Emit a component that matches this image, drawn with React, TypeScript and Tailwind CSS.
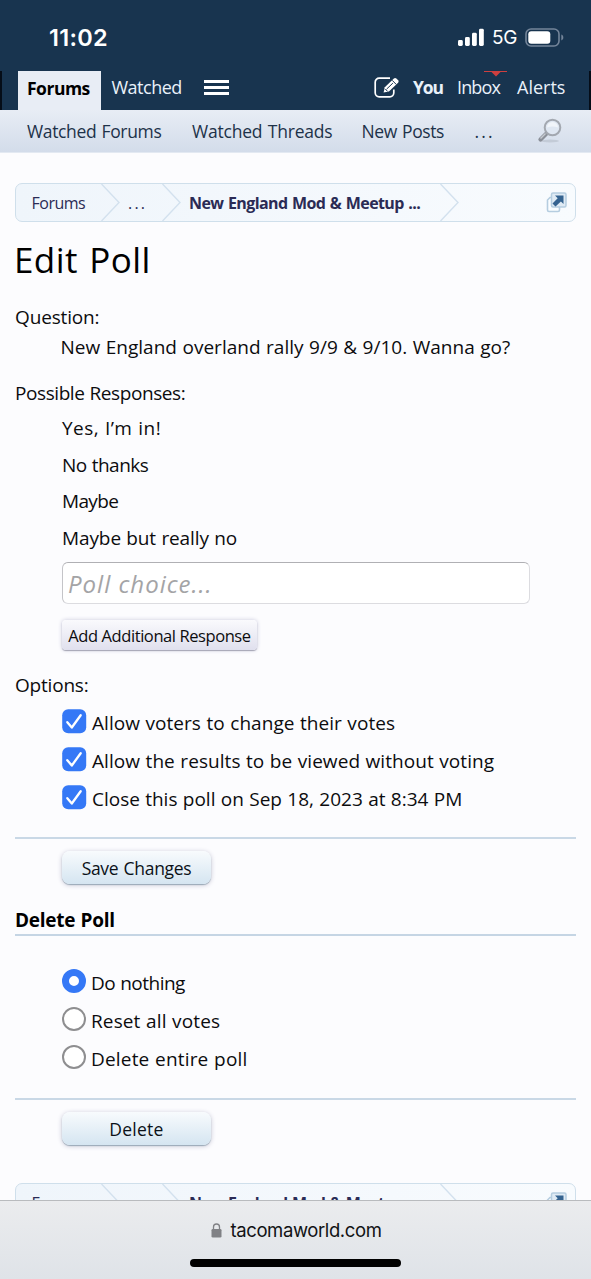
import clsx from "clsx";

const responses = [
  { text: "Yes, I’m in!", className: "tracking-[0.45px]" },
  { text: "No thanks", className: "tracking-[-0.5px]" },
  { text: "Maybe", className: "tracking-[-0.65px]" },
  { text: "Maybe but really no", className: "tracking-[-0.1px]" },
];

const options = [
  {
    text: "Allow voters to change their votes",
    className: "tracking-[0.05px]",
  },
  {
    text: "Allow the results to be viewed without voting",
    className: "tracking-[0.06px]",
  },
  {
    text: "Close this poll on Sep 18, 2023 at 8:34 PM",
    className: "tracking-[-0.02px]",
  },
];

const deleteOptions = [
  { text: "Do nothing", className: "tracking-[-0.5px]", checked: true },
  { text: "Reset all votes", className: "tracking-[0.12px]", checked: false },
  { text: "Delete entire poll", className: "tracking-[0.18px]", checked: false },
];

const StatusBar = () => (
  <div className="h-[71px] shrink-0 flex justify-between pl-[49px] pr-[27px] text-white font-['Inter',sans-serif]">
    <p className="mt-[23px] text-[23.5px] leading-[30px] font-semibold tracking-[0.28px]">
      11:02
    </p>
    <div className="flex items-center h-[30px] mt-[23px]">
      <svg className="-mt-[2px]" width="27" height="18" viewBox="0 0 27 18" fill="currentColor">
        <rect x="0" y="12" width="4.800" height="6" rx="1.4" />
        <rect x="7" y="9" width="4.800" height="9" rx="1.4" />
        <rect x="14" y="4.800" width="4.800" height="13.200" rx="1.4" />
        <rect x="21" y="0.800" width="4.800" height="17.200" rx="1.4" />
      </svg>
      <span className="ml-[7px] w-[26px] text-[19px] tracking-[-0.2px]">5G</span>
      <svg className="ml-[7px]" width="39" height="20" viewBox="0 0 39 20">
        <rect
          x="1"
          y="1"
          width="33"
          height="17"
          rx="5"
          fill="none"
          stroke="#74859a"
          strokeWidth="1.6"
        />
        <rect x="3.3" y="3.3" width="22" height="12.4" rx="3" fill="#fff" />
        <path d="M36.3 6.6c1.6.6 2 1.6 2 2.9s-.4 2.3-2 2.9z" fill="#74859a" />
      </svg>
    </div>
  </div>
);

const NavTabs = () => (
  <div className="relative h-[39px] shrink-0 flex text-lg leading-[33px] text-[#e9f1fa]">
    <div className="absolute left-0 top-0 w-[2px] h-[39px] bg-[#050d18]" />
    <div className="absolute right-0 top-0 w-[2px] h-[39px] bg-[#050d18]" />
    <div className="ml-[18px] w-[83px] pl-[9px] bg-[#e8edf5] text-black font-bold text-[17.5px] leading-[35px] tracking-[-0.5px]">
      Forums
    </div>
    <p className="ml-[10.5px] w-[92px] tracking-[-0.5px]">Watched</p>
    <div className="mt-[9px] h-[15px] w-[25px] flex flex-col justify-between">
      <div className="h-[3px] bg-white" />
      <div className="h-[3px] bg-white" />
      <div className="h-[3px] bg-white" />
    </div>
    <svg
      className="ml-[145.5px] mt-[6px]"
      width="27"
      height="22"
      viewBox="0 0 27 22"
      fill="none"
      stroke="#fff"
    >
      <path
        d="M16 1.2H5.2a4 4 0 0 0-4 4v10.6a4 4 0 0 0 4 4h10.6a4 4 0 0 0 4-4v-3.3"
        strokeWidth="1.7"
      />
      <path
        d="m9.6 15.5 1.2-5.2L19.9 1.500q1.3-1 2.5.1l1.7 1.7q1.1 1.2 0 2.5l-9.2 8.7z"
        fill="#fff"
        stroke="none"
      />
      <path
        d="m18.2 3.3 4.1 4.2M12.6 12.1l6.3-6M11.3 12l2.3 2.4"
        stroke="#18344f"
        strokeWidth="1"
      />
    </svg>
    <p className="ml-[12px] w-[44px] text-[17.5px] font-bold tracking-[-1.1px]">
      You
    </p>
    <div className="relative w-[60px]">
      <p className="tracking-[-0.85px]">Inbox</p>
      <svg className="absolute left-[27px] top-0" width="23" height="6">
        <path d="M0 0h23v1H16.500L12 5.500 7.500 1H0z" fill="#ce3f3f" />
      </svg>
    </div>
    <p>Alerts</p>
  </div>
);

const SearchIcon = () => (
  <svg
    className="absolute left-[537px] top-[8px]"
    width="26"
    height="26"
    viewBox="0 0 26 26"
  >
    <ellipse cx="13" cy="23" rx="9" ry="1.500" fill="#c3cbd7" />
    <path
      d="m9 16-5.500 5.500"
      stroke="#8b9099"
      strokeWidth="4.200"
      strokeLinecap="round"
    />
    <path d="m8.500 15.500-5 5" stroke="#c5c9d0" strokeWidth="1.400" />
    <circle
      cx="15.500"
      cy="9.500"
      r="7.800"
      fill="#dfe7f2"
      stroke="#a3a8b0"
      strokeWidth="2"
    />
    <path d="M10 9.500a5.500 5.500 0 0 1 11 0q-5.500-2-11 0" fill="#f1f5fa" />
  </svg>
);

const SubNav = () => (
  <div className="relative h-[43px] shrink-0 flex pl-[27px] bg-linear-to-b from-[#e8edf5] to-[#d3dcea] border-b border-[#e3e9f2] text-[17.5px] leading-[42px] text-[#1d3249] [word-spacing:1px]">
    <p className="w-[165px] tracking-[-0.35px]">Watched Forums</p>
    <p className="w-[169.500px] tracking-[-0.2px]">Watched Threads</p>
    <p className="w-[113px] tracking-[-0.4px]">New Posts</p>
    <p className="tracking-[2.2px]">...</p>
    <SearchIcon />
  </div>
);

const CrumbArrow = () => (
  <svg
    className="shrink-0"
    width="19"
    height="37"
    viewBox="0 0 19 37"
    fill="none"
    stroke="#d3e1ee"
    strokeWidth="1.400"
  >
    <path d="M.5 0 18 18.500.5 37" />
  </svg>
);

const Breadcrumb = () => (
  <div className="h-[39px] shrink-0 flex border-[1.500px] border-[#cfdfeb] rounded-[7px] bg-linear-to-r from-[#eff5fb] to-[#f8fbfe] text-base leading-[38px] text-[#2b2b55]">
    <p className="pl-[15.500px] w-[85px] tracking-[-0.5px]">Forums</p>
    <CrumbArrow />
    <p className="pl-[8px] w-[42px] tracking-[2.200px]">...</p>
    <CrumbArrow />
    <p className="pl-[8px] w-[259px] font-bold tracking-[-0.6px] [word-spacing:1px] whitespace-nowrap">
      New England Mod &amp; Meetup ...
    </p>
    <CrumbArrow />
    <svg
      className="ml-[87px] mt-[8px]"
      width="21"
      height="21"
      viewBox="0 0 21 21"
    >
      <path
        d="M4 5.500h9.500v12.500a1.500 1.500 0 0 1-1.500 1.500H3A1.500 1.500 0 0 1 1.500 18V8z"
        fill="#fafdff"
        stroke="#b5cde0"
        strokeWidth="1.600"
      />
      <rect
        x="5.500"
        y="1"
        width="14.500"
        height="14"
        rx="1.500"
        fill="#dfeaf4"
        stroke="#b5cde0"
        strokeWidth="1.500"
      />
      <path
        d="M9 3.500h8.500V12l-2.600-2.600L9.500 14.500 6.500 11.500l5.200-5.200z"
        fill="#356390"
      />
    </svg>
  </div>
);

const Checkbox = () => (
  <svg className="shrink-0 -mt-[4px]" width="25" height="25" viewBox="0 0 25 25">
    <rect x="0.200" y="0.200" width="24" height="24" rx="6" fill="#3578f6" />
    <path
      d="m5.300 13.200 4.500 5.300L18.700 6.300"
      fill="none"
      stroke="#fff"
      strokeWidth="2.300"
      strokeLinecap="round"
      strokeLinejoin="round"
    />
  </svg>
);

const Radio = ({ checked }: { checked: boolean }) => (
  <span
    className={clsx(
      "shrink-0 size-[24px] mr-px -mt-[4px] rounded-full bg-white",
      checked ? "border-[7px] border-[#3578f6]" : "border-2 border-[#8e8e90]"
    )}
  />
);

const SubmitButton = ({ text, className }: { text: string; className?: string }) => (
  <button
    className={clsx(
      "block ml-[47px] w-[149px] h-[33px] rounded-[8px] bg-linear-to-b from-[#f8fbfd] to-[#d5e5f1] shadow-[0_1px_1px_#9aa9b7,0_1px_5px_#c3c3d3] text-[17.5px] leading-[34px] text-[#0b1118] [word-spacing:1px]",
      className
    )}
  >
    {text}
  </button>
);

const BrowserBar = () => (
  <div className="absolute inset-x-0 bottom-0 h-[79px] border-t border-[#b9bbbe] bg-linear-to-b from-[#ebecee] to-[#dfe3e8] font-['Inter',sans-serif]">
    <div className="flex mt-[14px] pl-[211px] items-center h-[30px]">
      <svg width="11" height="15" viewBox="0 0 11 15">
        <rect x="0.500" y="6" width="10" height="8.500" rx="1.300" fill="#808185" />
        <path
          d="M2.500 7V4a3 3 0 0 1 6 0v3"
          fill="none"
          stroke="#808185"
          strokeWidth="1.300"
        />
      </svg>
      <p className="ml-[8.500px] mt-px text-[18.5px] tracking-[-0.400px] text-[#111214]">
        tacomaworld.com
      </p>
    </div>
    <div className="mt-[14px] mx-auto w-[211px] h-[8px] rounded-full bg-black" />
  </div>
);

const App = () => {
  return (
    <div className="relative w-[591px] h-[1279px] overflow-hidden flex flex-col bg-[#18344f] font-['Open_Sans',sans-serif]">
      <StatusBar />
      <NavTabs />
      <SubNav />
      <main className="grow px-[15px] pt-[30px] bg-[#fcfcfe] text-[19px] leading-[30px] text-[#0c0c0e] [word-spacing:0.5px]">
        <Breadcrumb />
        <h1 className="h-[80px] text-[35px] leading-[75px] text-black tracking-[0.4px] [word-spacing:2px] -ml-px">
          Edit Poll
        </h1>

        <p className="tracking-[-0.15px]">Question:</p>
        <p className="pl-[45.500px] tracking-[0.02px]">
          New England overland rally 9/9 &amp; 9/10. Wanna go?
        </p>

        <p className="mt-4 tracking-[-0.42px]">Possible Responses:</p>
        <div className="mt-[3px] pl-[47px]">
          {responses.map((r) => (
            <p key={r.text} className={clsx("h-[36.5px] leading-[35px]", r.className)}>
              {r.text}
            </p>
          ))}
        </div>
        <input
          placeholder="Poll choice..."
          className="block mt-[5px] ml-[47px] w-[468px] h-[42px] pl-[5px] rounded-[6px] border border-[#dcdce0] border-t-[#b0b0b4] border-l-[#c4c4c8] bg-white text-[24px] italic tracking-[1px] placeholder:text-[#a4a4a6]"
        />
        <button className="block mt-[16px] ml-[47px] w-[195px] h-[30px] rounded-[4px] bg-linear-to-b from-[#fafafd] to-[#e0e0ee] shadow-[0_1px_1px_#a5a5b4,0_0_4px_#c9c9dc] text-[16.5px] leading-[32px] tracking-[-0.42px] whitespace-nowrap">
          Add Additional Response
        </button>

        <p className="mt-[20px] tracking-[-0.2px]">Options:</p>
        <div className="mt-[4px] pl-[47px]">
          {options.map((o) => (
            <label key={o.text} className="flex items-center h-[38px]">
              <Checkbox />
              <span className={clsx("ml-[5px]", o.className)}>{o.text}</span>
            </label>
          ))}
        </div>

        <div className="mt-[19px] border-t-2 border-[#c9d8e6]" />
        <SubmitButton text="Save Changes" className="mt-[12px] tracking-[-0.3px]" />

        <h2 className="mt-[21px] h-[31px] border-b-2 border-[#c5d5e4] font-bold text-black tracking-[-0.25px]">
          Delete Poll
        </h2>
        <div className="mt-[28px] pl-[47px]">
          {deleteOptions.map((o) => (
            <label key={o.text} className="flex items-center h-[38px]">
              <Radio checked={o.checked} />
              <span className={clsx("ml-[4px]", o.className)}>{o.text}</span>
            </label>
          ))}
        </div>

        <div className="mt-[20px] border-t-2 border-[#c9d8e6]" />
        <SubmitButton text="Delete" className="mt-[12px] mb-[38px] tracking-[0.25px]" />
        <Breadcrumb />
      </main>
      <BrowserBar />
    </div>
  );
};

export default App;
